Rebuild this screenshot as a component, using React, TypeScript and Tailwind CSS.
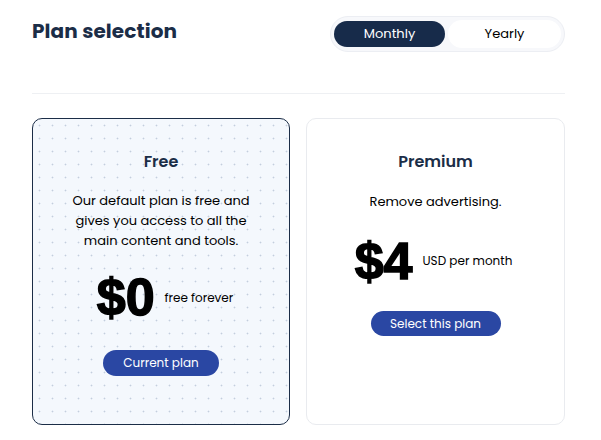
import { useState } from "react";

const font = { fontFamily: '"Poppins", "Inter", "Liberation Sans", sans-serif' };
const priceFont = { fontFamily: '"Liberation Sans", Arial, sans-serif' };

export default function App() {
  const [period, setPeriod] = useState("monthly");

  return (
    <div
      className="w-[601px] h-[440px] bg-white pl-8 pr-[36px] pt-4 text-[#1b2d47]"
      style={font}
    >
      <div className="flex items-start justify-between h-[36px]">
        <h1 className="text-[20px] font-bold leading-none mt-[5px] tracking-[0.1px]">Plan selection</h1>
        <div className="flex items-center h-[36px] w-[235px] rounded-full border border-[#eceef3] bg-[#f7f8fb] p-[3px] gap-[3px]">
          <button
            className={`h-[26px] w-[111px] rounded-full text-[13px] ${
              period === "monthly" ? "bg-[#172b4a] text-white" : "bg-white text-black"
            }`}
            onClick={() => setPeriod("monthly")}
          >
            Monthly
          </button>
          <button
            className={`h-[28px] flex-1 rounded-full text-[13px] ${
              period === "yearly" ? "bg-[#172b4a] text-white" : "bg-white text-black"
            }`}
            onClick={() => setPeriod("yearly")}
          >
            Yearly
          </button>
        </div>
      </div>

      <div className="mt-[41px] border-t border-[#eef0f3]" />

      <div className="mt-[24px] grid grid-cols-[258px_259px] gap-4">
        <div className="h-[307px] rounded-[10px] border-[1.5px] border-[#1b2d47] bg-[#f4f8fd] bg-[radial-gradient(circle,#c3cedd_0.8px,transparent_1.1px)] bg-[size:13px_13px] flex flex-col items-center pt-[35px]">
          <h2 className="text-[16px] font-semibold leading-none">Free</h2>
          <p className="mt-[21px] text-[13px] leading-[20px] text-black text-center w-[200px]">
            Our default plan is free and gives you access to all the main content and tools.
          </p>
          <div className="mt-[20px] flex items-center gap-[10px] ml-[8px]">
            <span className="text-[52px] font-bold leading-none text-black [-webkit-text-stroke:1.5px_black]" style={priceFont}>
              $0
            </span>
            <span className="text-[12px] text-black mt-[2px]">free forever</span>
          </div>
          <button className="mt-[27px] h-[26px] w-[116px] rounded-full bg-[#2a47a3] text-white text-[12px]">
            Current plan
          </button>
        </div>

        <div className="h-[307px] rounded-[10px] border-[1.5px] border-[#e9ebef] bg-white flex flex-col items-center pt-[35px]">
          <h2 className="text-[16px] font-semibold leading-none">Premium</h2>
          <p className="mt-[22px] text-[13px] leading-[20px] text-black text-center">Remove advertising.</p>
          <div className="mt-[23px] flex items-center gap-[10px] mr-[4px]">
            <span className="text-[52px] font-bold leading-none text-black [-webkit-text-stroke:1.5px_black]" style={priceFont}>
              $4
            </span>
            <span className="text-[12px] text-black">USD per month</span>
          </div>
          <button className="mt-[24px] h-[25px] w-[130px] rounded-full bg-[#2a47a3] text-white text-[12px]">
            Select this plan
          </button>
        </div>
      </div>
    </div>
  );
}
